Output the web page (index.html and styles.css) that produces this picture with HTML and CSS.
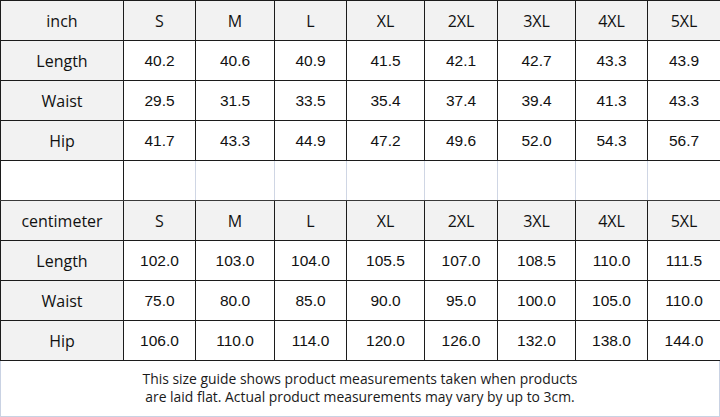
FILE: index.html
```html
<!DOCTYPE html>
<html>
<head>
<meta charset="utf-8">
<link rel="stylesheet" href="styles.css">
</head>
<body>
<div class="guide">
<table class="sizes">
<colgroup>
<col class="c0"><col class="c1"><col class="c2"><col class="c3"><col class="c4"><col class="c5"><col class="c6"><col class="c7"><col class="c8">
</colgroup>
<tr class="head"><th class="lab">inch</th><th>S</th><th>M</th><th>L</th><th>XL</th><th>2XL</th><th>3XL</th><th>4XL</th><th>5XL</th></tr>
<tr><th class="lab">Length</th><td>40.2</td><td>40.6</td><td>40.9</td><td>41.5</td><td>42.1</td><td>42.7</td><td>43.3</td><td>43.9</td></tr>
<tr><th class="lab">Waist</th><td>29.5</td><td>31.5</td><td>33.5</td><td>35.4</td><td>37.4</td><td>39.4</td><td>41.3</td><td>43.3</td></tr>
<tr><th class="lab">Hip</th><td>41.7</td><td>43.3</td><td>44.9</td><td>47.2</td><td>49.6</td><td>52.0</td><td>54.3</td><td>56.7</td></tr>
<tr class="gap"><td></td><td></td><td></td><td></td><td></td><td></td><td></td><td></td><td></td></tr>
<tr class="head"><th class="lab">centimeter</th><th>S</th><th>M</th><th>L</th><th>XL</th><th>2XL</th><th>3XL</th><th>4XL</th><th>5XL</th></tr>
<tr><th class="lab">Length</th><td>102.0</td><td>103.0</td><td>104.0</td><td>105.5</td><td>107.0</td><td>108.5</td><td>110.0</td><td>111.5</td></tr>
<tr><th class="lab">Waist</th><td>75.0</td><td>80.0</td><td>85.0</td><td>90.0</td><td>95.0</td><td>100.0</td><td>105.0</td><td>110.0</td></tr>
<tr><th class="lab">Hip</th><td>106.0</td><td>110.0</td><td>114.0</td><td>120.0</td><td>126.0</td><td>132.0</td><td>138.0</td><td>144.0</td></tr>
</table>
<div class="note">
<p>This size guide shows product measurements taken when products<br>are laid flat. Actual product measurements may vary by up to 3cm.</p>
</div>
</div>
</body>
</html>
```

FILE: styles.css
```css
html, body {
  margin: 0;
  padding: 0;
  background: #ffffff;
}

.guide {
  width: 720px;
  height: 417px;
  display: flex;
  flex-direction: column;
}

.sizes {
  border-collapse: collapse;
  table-layout: fixed;
  width: 720px;
  font-family: "Liberation Sans", Arial, sans-serif;
  font-size: 15.5px;
  color: #111;
}

.c0 { width: 123px; }
.c1 { width: 72px; }
.c2 { width: 79px; }
.c3 { width: 72px; }
.c4 { width: 78px; }
.c5 { width: 73px; }
.c6 { width: 78px; }
.c7 { width: 72px; }
.c8 { width: 73px; }

.sizes th,
.sizes td {
  border: 1px solid #1c1c1c;
  height: 39px;
  padding: 0;
  text-align: center;
  vertical-align: middle;
  font-weight: normal;
  line-height: 18px;
}

.sizes th {
  background: #f2f2f2;
}

.sizes .lab,
.sizes .head th {
  font-family: "Open Sans", "Noto Sans", sans-serif;
  font-size: 16px;
}

.sizes .gap td {
  background: #ffffff;
  border-top-color: #3a3a3a;
  border-bottom-color: #3a3a3a;
}

.sizes .gap td:not(:first-child) {
  border-left-color: #cfd6e4;
  border-right-color: #cfd6e4;
}

.note {
  flex: 1;
  border: 1px solid #c9d2e3;
  border-top: none;
  display: flex;
  justify-content: center;
  align-items: center;
}

.note p {
  margin: 0 0 1px 0;
  font-family: "Open Sans", "Noto Sans", sans-serif;
  font-size: 13.9px;
  line-height: 18px;
  color: #1a1a1a;
  text-align: center;
}
```
